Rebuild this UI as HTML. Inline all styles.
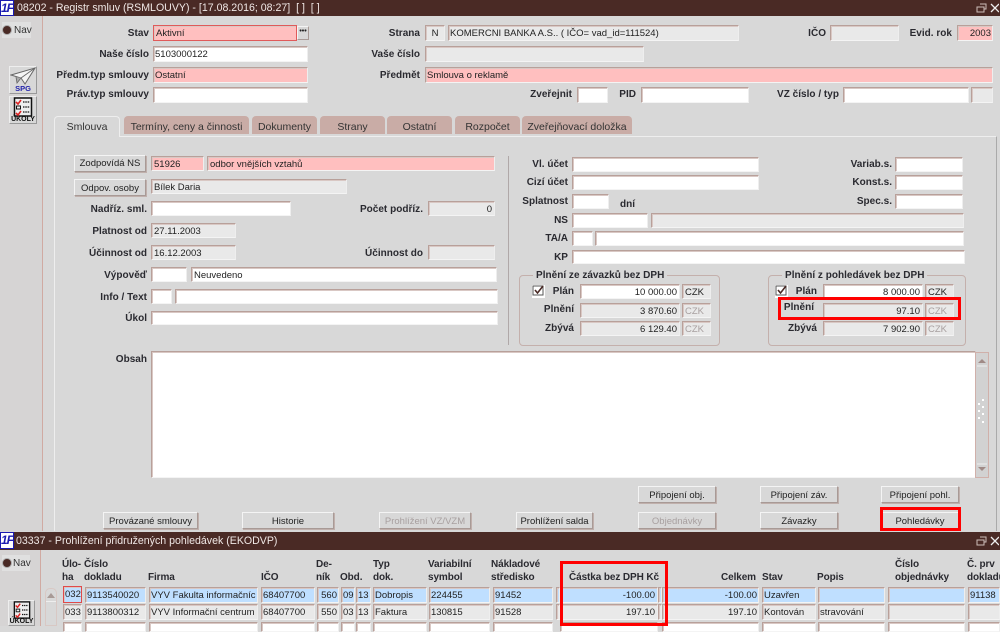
<!DOCTYPE html>
<html style="background:#d8d8d8"><head><meta charset="utf-8"><style>
html,body{margin:0;padding:0}
body{width:1000px;height:626px;overflow:hidden;position:relative;background:#d8d8d8;font-family:"Liberation Sans",sans-serif;font-size:9.5px;color:#222;filter:blur(.3px)}
div,span.a{position:absolute;box-sizing:border-box}
.t{background:#4a2a25;color:#f0e8e6;font-size:10.6px;left:0;width:1000px;white-space:nowrap;line-height:16px}
.l{font-weight:bold;font-size:10px;letter-spacing:.02px;color:#2a2a30;white-space:nowrap;line-height:12px}
.f{background:#fff;border:1px solid;border-color:#b8a09a #eee #f4f4f4 #b8a09a;box-shadow:inset 1px 1px 0 #d9c8c4;padding:0 2px;white-space:nowrap;overflow:hidden;line-height:15px;font-size:9.5px}
.p{background:#ffbfbf}.g{background:#e9e9e9}.b{background:#bfdfff}.r{text-align:right}
.btn{background:#d8d8d8;border:1px solid;border-color:#f4f4f4 #a89a96 #a89a96 #f4f4f4;box-shadow:1px 1px 0 #c0b0ac;text-align:center;line-height:17px;font-size:9.5px;color:#222;white-space:nowrap}
.dis{color:#a8a0a0}
.tab{background:#c9aca6;border-radius:4px 4px 0 0;top:116px;height:18px;text-align:center;line-height:22px;font-size:10.5px;color:#333;white-space:nowrap}
.red{border:3px solid #f00}
.grp{border:1px solid #c4b0ac;border-radius:4px}
.th{font-weight:bold;font-size:10px;letter-spacing:-.1px;line-height:13px;color:#2a2a30;white-space:nowrap}
.c{top:587px;height:16px}.d{top:604px;height:16px}.e{top:622px;height:10px}
.c,.d,.e{font-size:9.5px;line-height:16px;padding:0 1px}
.lg{font:italic bold 12px/14px "Liberation Sans",sans-serif;color:#1a1ab0;text-align:center;background:#fff;border:1px solid #1a1ab0;letter-spacing:-1px}
</style></head><body>

<div class="t" style="top:0;height:16px;padding-left:17px">08202 - Registr smluv (RSMLOUVY) - [17.08.2016; 08:27]&nbsp; [ ]&nbsp; [ ]</div>
<div class="lg" style="left:0;top:0;width:14px;height:16px">1F</div>
<svg style="position:absolute;left:975px;top:2px" width="24" height="12" viewBox="0 0 24 12"><path d="M5 2h6v5H9M2 5h7v5H2z" fill="none" stroke="#cdbdb9"/><path d="M16 2l8 8M24 2l-8 8" stroke="#eee" stroke-width="1.3" fill="none"/></svg>

<div style="left:0;top:16px;width:43px;height:515px;background:#d6d4d4;border-right:1px solid #d0aaa2"></div>
<div style="left:2px;top:22px;width:29px;height:16px;background:#e0e0e0"></div>
<div style="left:2px;top:25px;width:10px;height:10px;border-radius:50%;background:#4a2a25;border:1px solid #aaa"></div>
<div style="left:14px;top:25px;line-height:12px;font-size:10px;color:#333">Nav</div>

<div style="left:9px;top:66px;width:28px;height:28px;background:#d8d8d8;border:1px solid;border-color:#eee #999 #999 #eee"></div>
<svg style="position:absolute;left:10px;top:67px" width="26" height="18" viewBox="0 0 26 18"><path d="M1 8L25 1 15 17 11 11z" fill="#f4f4f4" stroke="#666"/><path d="M11 11L25 1M6 10l1 6 4-5" fill="#aaa" stroke="#666" stroke-width=".8"/></svg>
<div style="left:9px;top:84px;width:28px;text-align:center;color:#2222aa;font-weight:bold;font-size:7.5px;line-height:9px">SPG</div>
<div style="left:9px;top:96px;width:28px;height:28px;background:#d8d8d8;border:1px solid;border-color:#eee #999 #999 #eee"></div>
<svg style="position:absolute;left:13px;top:97px" width="20" height="20" viewBox="0 0 20 20"><rect x="1.5" y="1" width="17" height="18" fill="#eee" stroke="#111" stroke-width="1.5"/><path d="M3 5l2 2 3-4M3 16l2 2 3-4" stroke="#d22" stroke-width="1.6" fill="none"/><rect x="3.5" y="9" width="4" height="3" fill="none" stroke="#111"/><path d="M10 5h7M10 10h7M10 15h7" stroke="#111" stroke-width="1.3" stroke-dasharray="1.5 .8"/></svg>
<div style="left:9px;top:116px;width:28px;text-align:center;color:#111;font-weight:bold;font-size:7px;line-height:8px">ÚKOLY</div>

<div class="l" style="right:851px;top:28px">Stav</div>
<div class="f p" style="left:153px;top:25px;width:144px;height:16px;border:1px solid #e05a5a">Aktivní</div>
<div class="btn" style="left:297px;top:26px;width:12px;height:14px;line-height:9px;font-weight:bold;box-shadow:none;font-size:7px">•••</div>
<div class="l" style="right:851px;top:49px">Naše číslo</div>
<div class="f" style="left:153px;top:46px;width:155px;height:16px;padding-left:1px">5103000122</div>
<div class="l" style="right:851px;top:70px">Předm.typ smlouvy</div>
<div class="f p" style="left:153px;top:67px;width:155px;height:16px;padding-left:1px">Ostatní</div>
<div class="l" style="right:851px;top:89px">Práv.typ smlouvy</div>
<div class="f" style="left:153px;top:87px;width:155px;height:16px"></div>

<div class="l" style="right:580px;top:28px">Strana</div>
<div class="f g" style="left:425px;top:25px;width:20px;height:16px;text-align:center">N</div>
<div class="f g" style="left:448px;top:25px;width:291px;height:16px;padding-left:1px">KOMERCNI BANKA A.S.. ( IČO= vad_id=111524)</div>
<div class="l" style="right:580px;top:49px">Vaše číslo</div>
<div class="f g" style="left:425px;top:46px;width:219px;height:16px"></div>
<div class="l" style="right:580px;top:70px">Předmět</div>
<div class="f p" style="left:425px;top:67px;width:568px;height:16px;padding-left:1px">Smlouva o reklamě</div>
<div class="l" style="right:428px;top:89px">Zveřejnit</div>
<div class="f" style="left:577px;top:87px;width:31px;height:16px"></div>
<div class="l" style="right:364px;top:89px">PID</div>
<div class="f" style="left:641px;top:87px;width:108px;height:16px"></div>
<div class="l" style="right:161px;top:89px">VZ číslo / typ</div>
<div class="f" style="left:843px;top:87px;width:126px;height:16px"></div>
<div class="f g" style="left:971px;top:87px;width:22px;height:16px"></div>
<div class="l" style="right:174px;top:28px">IČO</div>
<div class="f g" style="left:830px;top:25px;width:69px;height:16px"></div>
<div class="l" style="right:48px;top:28px">Evid. rok</div>
<div class="f p r" style="left:957px;top:25px;width:36px;height:16px;padding-right:1px">2003</div>

<!-- tabs -->
<div style="left:54px;top:136px;width:943px;height:395px;border:1px solid #eee;border-bottom:0;border-right-color:#aaa"></div>
<div class="tab" style="left:54px;width:66px;height:21px;background:#d8d8d8;border:1px solid #eee;border-bottom:0;line-height:21px">Smlouva</div>
<div class="tab" style="left:124px;width:125px">Termíny, ceny a činnosti</div>
<div class="tab" style="left:252px;width:65px">Dokumenty</div>
<div class="tab" style="left:320px;width:65px">Strany</div>
<div class="tab" style="left:387px;width:65px">Ostatní</div>
<div class="tab" style="left:455px;width:65px">Rozpočet</div>
<div class="tab" style="left:522px;width:110px">Zveřejňovací doložka</div>

<div class="btn" style="left:74px;top:155px;width:72px;height:17px;line-height:16px">Zodpovídá NS</div>
<div class="f p" style="left:151px;top:156px;width:53px;height:15px">51926</div>
<div class="f p" style="left:207px;top:156px;width:288px;height:15px">odbor vnějších vztahů</div>
<div class="btn" style="left:74px;top:179px;width:72px;height:17px">Odpov. osoby</div>
<div class="f g" style="left:151px;top:179px;width:196px;height:15px">Bílek Daria</div>
<div class="l" style="right:853px;top:204px">Nadříz. sml.</div>
<div class="f" style="left:151px;top:201px;width:140px;height:15px"></div>
<div class="l" style="right:577px;top:204px">Počet podříz.</div>
<div class="f g r" style="left:428px;top:201px;width:67px;height:15px">0</div>
<div class="l" style="right:853px;top:226px">Platnost od</div>
<div class="f g" style="left:151px;top:223px;width:85px;height:15px">27.11.2003</div>
<div class="l" style="right:853px;top:248px">Účinnost od</div>
<div class="f g" style="left:151px;top:245px;width:85px;height:15px">16.12.2003</div>
<div class="l" style="right:577px;top:248px">Účinnost do</div>
<div class="f g" style="left:428px;top:245px;width:67px;height:15px"></div>
<div class="l" style="right:853px;top:270px">Výpověď</div>
<div class="f" style="left:151px;top:267px;width:36px;height:15px"></div>
<div class="f" style="left:191px;top:267px;width:306px;height:15px">Neuvedeno</div>
<div class="l" style="right:853px;top:292px">Info / Text</div>
<div class="f" style="left:151px;top:289px;width:21px;height:15px"></div>
<div class="f" style="left:175px;top:289px;width:323px;height:15px"></div>
<div class="l" style="right:853px;top:313px">Úkol</div>
<div class="f" style="left:151px;top:311px;width:347px;height:14px"></div>

<div style="left:508px;top:156px;width:1px;height:189px;background:#b0a8a8"></div>

<div class="l" style="right:432px;top:159px">Vl. účet</div>
<div class="f" style="left:572px;top:157px;width:187px;height:15px"></div>
<div class="l" style="right:432px;top:177px">Cizí účet</div>
<div class="f" style="left:572px;top:175px;width:187px;height:15px"></div>
<div class="l" style="right:432px;top:196px">Splatnost</div>
<div class="f" style="left:572px;top:194px;width:37px;height:15px"></div>
<div class="l" style="left:620px;top:199px">dní</div>
<div class="l" style="right:432px;top:215px">NS</div>
<div class="f" style="left:572px;top:213px;width:76px;height:15px"></div>
<div class="f g" style="left:651px;top:213px;width:313px;height:15px"></div>
<div class="l" style="right:432px;top:233px">TA/A</div>
<div class="f" style="left:572px;top:231px;width:21px;height:15px"></div>
<div class="f" style="left:595px;top:231px;width:369px;height:15px"></div>
<div class="l" style="right:432px;top:252px">KP</div>
<div class="f" style="left:572px;top:250px;width:393px;height:14px"></div>
<div class="l" style="right:108px;top:159px">Variab.s.</div>
<div class="f" style="left:895px;top:157px;width:68px;height:15px"></div>
<div class="l" style="right:108px;top:177px">Konst.s.</div>
<div class="f" style="left:895px;top:175px;width:68px;height:15px"></div>
<div class="l" style="right:108px;top:196px">Spec.s.</div>
<div class="f" style="left:895px;top:194px;width:68px;height:15px"></div>

<!-- groups -->
<div class="grp" style="left:519px;top:275px;width:201px;height:71px"></div>
<div class="l" style="left:533px;top:270px;background:#d8d8d8;padding:0 3px">Plnění ze závazků bez DPH</div>
<div style="left:532px;top:285px;width:13px;height:13px;background:#fff"></div>
<svg style="position:absolute;left:532px;top:285px" width="13" height="13"><path d="M1 1h10v9H1z" fill="none" stroke="#555"/><path d="M3 5l2.5 3L11 1" stroke="#4a2a25" stroke-width="1.6" fill="none"/></svg>
<div class="l" style="right:426px;top:286px">Plán</div>
<div class="f r" style="left:580px;top:284px;width:100px;height:15px">10 000.00</div>
<div class="f g" style="left:682px;top:284px;width:29px;height:15px">CZK</div>
<div class="l" style="right:426px;top:304px">Plnění</div>
<div class="f g r" style="left:580px;top:303px;width:100px;height:15px">3 870.60</div>
<div class="f g dis" style="left:682px;top:303px;width:29px;height:15px">CZK</div>
<div class="l" style="right:426px;top:323px">Zbývá</div>
<div class="f g r" style="left:580px;top:321px;width:100px;height:15px">6 129.40</div>
<div class="f g dis" style="left:682px;top:321px;width:29px;height:15px">CZK</div>

<div class="grp" style="left:768px;top:275px;width:198px;height:71px"></div>
<div class="l" style="left:782px;top:270px;background:#d8d8d8;padding:0 3px">Plnění z pohledávek bez DPH</div>
<div style="left:775px;top:285px;width:13px;height:13px;background:#fff"></div>
<svg style="position:absolute;left:775px;top:285px" width="13" height="13"><path d="M1 1h10v9H1z" fill="none" stroke="#555"/><path d="M3 5l2.5 3L11 1" stroke="#4a2a25" stroke-width="1.6" fill="none"/></svg>
<div class="l" style="right:183px;top:286px">Plán</div>
<div class="f r" style="left:823px;top:284px;width:100px;height:15px">8 000.00</div>
<div class="f g" style="left:925px;top:284px;width:29px;height:15px">CZK</div>
<div class="l" style="right:186px;top:302px">Plnění</div>
<div class="f g r" style="left:823px;top:303px;width:100px;height:15px">97.10</div>
<div class="f g dis" style="left:925px;top:303px;width:29px;height:15px">CZK</div>
<div class="l" style="right:183px;top:323px">Zbývá</div>
<div class="f g r" style="left:823px;top:321px;width:100px;height:15px">7 902.90</div>
<div class="f g dis" style="left:925px;top:321px;width:29px;height:15px">CZK</div>
<div class="red" style="left:778px;top:297px;width:183px;height:23px"></div>

<!-- obsah -->
<div class="l" style="right:853px;top:354px">Obsah</div>
<div class="f" style="left:151px;top:351px;width:825px;height:127px"></div>
<div style="left:975px;top:352px;width:14px;height:126px;background:#d2d2d2;border:1px solid #d0b0aa"></div>
<svg style="position:absolute;left:976px;top:352px" width="12" height="126" viewBox="0 0 12 126"><path d="M6 7l4 4H2z" fill="#a08a86"/><path d="M6 119l4-4H2z" fill="#a08a86"/><path d="M1 14h10M1 112h10" stroke="#eee"/><path d="M2 52h2M6 48h2M2 59h2M6 55h2M2 66h2M6 62h2M6 70h2" stroke="#fff" stroke-width="2"/></svg>

<!-- buttons -->
<div class="btn" style="left:638px;top:486px;width:78px;height:17px">Připojení obj.</div>
<div class="btn" style="left:760px;top:486px;width:78px;height:17px">Připojení záv.</div>
<div class="btn" style="left:881px;top:486px;width:78px;height:17px">Připojení pohl.</div>
<div class="btn" style="left:103px;top:512px;width:95px;height:17px">Provázané smlouvy</div>
<div class="btn" style="left:242px;top:512px;width:92px;height:17px">Historie</div>
<div class="btn dis" style="left:379px;top:512px;width:92px;height:17px">Prohlížení VZ/VZM</div>
<div class="btn" style="left:516px;top:512px;width:77px;height:17px">Prohlížení salda</div>
<div class="btn dis" style="left:638px;top:512px;width:78px;height:17px">Objednávky</div>
<div class="btn" style="left:760px;top:512px;width:78px;height:17px">Závazky</div>
<div class="btn" style="left:881px;top:512px;width:78px;height:17px">Pohledávky</div>
<div class="red" style="left:880px;top:507px;width:81px;height:24px"></div>

<!-- second window -->
<div class="t" style="top:532px;height:18px;padding-left:16px;line-height:18px;background:#4a2a25">03337 - Prohlížení přidružených pohledávek (EKODVP)</div>
<div class="lg" style="left:0;top:532px;width:14px;height:17px;line-height:15px">1F</div>
<svg style="position:absolute;left:975px;top:535px" width="24" height="12" viewBox="0 0 24 12"><path d="M5 2h6v5H9M2 5h7v5H2z" fill="none" stroke="#cdbdb9"/><path d="M16 2l8 8M24 2l-8 8" stroke="#eee" stroke-width="1.3" fill="none"/></svg>
<div style="left:0;top:550px;width:1000px;height:76px;background:#d8d8d8"></div>
<div style="left:0;top:550px;width:41px;height:76px;background:#d6d4d4;border-right:1px solid #d0aaa2"></div>
<div style="left:2px;top:555px;width:28px;height:16px;background:#e0e0e0"></div>
<div style="left:2px;top:558px;width:10px;height:10px;border-radius:50%;background:#4a2a25;border:1px solid #aaa"></div>
<div style="left:13px;top:558px;line-height:12px;font-size:10px;color:#333">Nav</div>
<div style="left:8px;top:600px;width:27px;height:26px;background:#d8d8d8;border:1px solid;border-color:#eee #999 #999 #eee"></div>
<svg style="position:absolute;left:13px;top:601px" width="18" height="18" viewBox="0 0 20 20"><rect x="1.5" y="1" width="17" height="18" fill="#eee" stroke="#111" stroke-width="1.5"/><path d="M3 5l2 2 3-4M3 16l2 2 3-4" stroke="#d22" stroke-width="1.6" fill="none"/><rect x="3.5" y="9" width="4" height="3" fill="none" stroke="#111"/><path d="M10 5h7M10 10h7M10 15h7" stroke="#111" stroke-width="1.3" stroke-dasharray="1.5 .8"/></svg>
<div style="left:8px;top:618px;width:27px;text-align:center;color:#111;font-weight:bold;font-size:7px;line-height:8px">ÚKOLY</div>

<div class="th" style="left:62px;top:558px">Úlo-<br>ha</div>
<div class="th" style="left:84px;top:558px">Číslo<br>dokladu</div>
<div class="th" style="left:148px;top:571px">Firma</div>
<div class="th" style="left:261px;top:571px">IČO</div>
<div class="th" style="left:316px;top:558px">De-<br>ník</div>
<div class="th" style="left:340px;top:571px">Obd.</div>
<div class="th" style="left:373px;top:558px">Typ<br>dok.</div>
<div class="th" style="left:428px;top:558px">Variabilní<br>symbol</div>
<div class="th" style="left:491px;top:558px">Nákladové<br>středisko</div>
<div class="th" style="left:569px;top:571px">Částka bez DPH Kč</div>
<div class="th" style="left:721px;top:571px">Celkem</div>
<div class="th" style="left:762px;top:571px">Stav</div>
<div class="th" style="left:817px;top:571px">Popis</div>
<div class="th" style="left:895px;top:558px">Číslo<br>objednávky</div>
<div class="th" style="left:967px;top:558px">Č. prv<br>dokladu</div>

<div style="left:45px;top:588px;width:12px;height:38px;background:#d8d8d8;border:1px solid #d8c8c4;border-radius:5px 5px 0 0"></div>
<svg style="position:absolute;left:46px;top:592px" width="10" height="8"><path d="M5 1l4 5H1z" fill="#a89a96"/></svg>
<div style="left:46px;top:601px;width:10px;height:1px;background:#eee"></div>

<!-- row 1 -->
<div class="f b c" style="left:63px;width:19px;border:1px solid #e04a4a;height:17px;top:586px">032</div>
<div class="f b c" style="left:85px;width:61px">9113540020</div>
<div class="f b c" style="left:149px;width:109px">VYV Fakulta informačníc</div>
<div class="f b c" style="left:261px;width:54px">68407700</div>
<div class="f b c r" style="left:317px;width:22px">560</div>
<div class="f b c" style="left:341px;width:14px">09</div>
<div class="f b c" style="left:356px;width:15px">13</div>
<div class="f b c" style="left:373px;width:54px">Dobropis</div>
<div class="f b c" style="left:429px;width:61px">224455</div>
<div class="f b c" style="left:493px;width:60px">91452</div>
<div class="f b c" style="left:556px;width:4px;padding:0"></div>
<div class="f b c r" style="left:560px;width:98px;padding-right:2px">-100.00</div>
<div class="f b c" style="left:658px;width:4px;padding:0"></div>
<div class="f b c r" style="left:662px;width:97px">-100.00</div>
<div class="f b c" style="left:762px;width:54px">Uzavřen</div>
<div class="f b c" style="left:818px;width:67px"></div>
<div class="f b c" style="left:888px;width:77px"></div>
<div class="f b c" style="left:968px;width:32px">91138</div>
<!-- row 2 -->
<div class="f g d" style="left:63px;width:19px">033</div>
<div class="f g d" style="left:85px;width:61px">9113800312</div>
<div class="f g d" style="left:149px;width:109px">VYV Informační centrum</div>
<div class="f g d" style="left:261px;width:54px">68407700</div>
<div class="f g d r" style="left:317px;width:22px">550</div>
<div class="f g d" style="left:341px;width:14px">03</div>
<div class="f g d" style="left:356px;width:15px">13</div>
<div class="f g d" style="left:373px;width:54px">Faktura</div>
<div class="f g d" style="left:429px;width:61px">130815</div>
<div class="f g d" style="left:493px;width:60px">91528</div>
<div class="f g d" style="left:556px;width:4px;padding:0"></div>
<div class="f g d r" style="left:560px;width:98px;padding-right:2px">197.10</div>
<div class="f g d" style="left:658px;width:4px;padding:0"></div>
<div class="f g d r" style="left:662px;width:97px">197.10</div>
<div class="f g d" style="left:762px;width:54px">Kontován</div>
<div class="f g d" style="left:818px;width:67px">stravování</div>
<div class="f g d" style="left:888px;width:77px"></div>
<div class="f g d" style="left:968px;width:32px"></div>
<!-- row 3 -->
<div class="f e" style="left:63px;width:19px"></div>
<div class="f e" style="left:85px;width:61px"></div>
<div class="f e" style="left:149px;width:109px"></div>
<div class="f e" style="left:261px;width:54px"></div>
<div class="f e" style="left:317px;width:22px"></div>
<div class="f e" style="left:341px;width:14px"></div>
<div class="f e" style="left:356px;width:15px"></div>
<div class="f e" style="left:373px;width:54px"></div>
<div class="f e" style="left:429px;width:61px"></div>
<div class="f e" style="left:493px;width:60px"></div>
<div class="f e" style="left:560px;width:98px"></div>
<div class="f e" style="left:662px;width:97px"></div>
<div class="f e" style="left:762px;width:54px"></div>
<div class="f e" style="left:818px;width:67px"></div>
<div class="f e" style="left:888px;width:77px"></div>
<div class="f e" style="left:968px;width:32px"></div>
<div class="red" style="left:560px;top:561px;width:108px;height:65px"></div>
</body></html>
